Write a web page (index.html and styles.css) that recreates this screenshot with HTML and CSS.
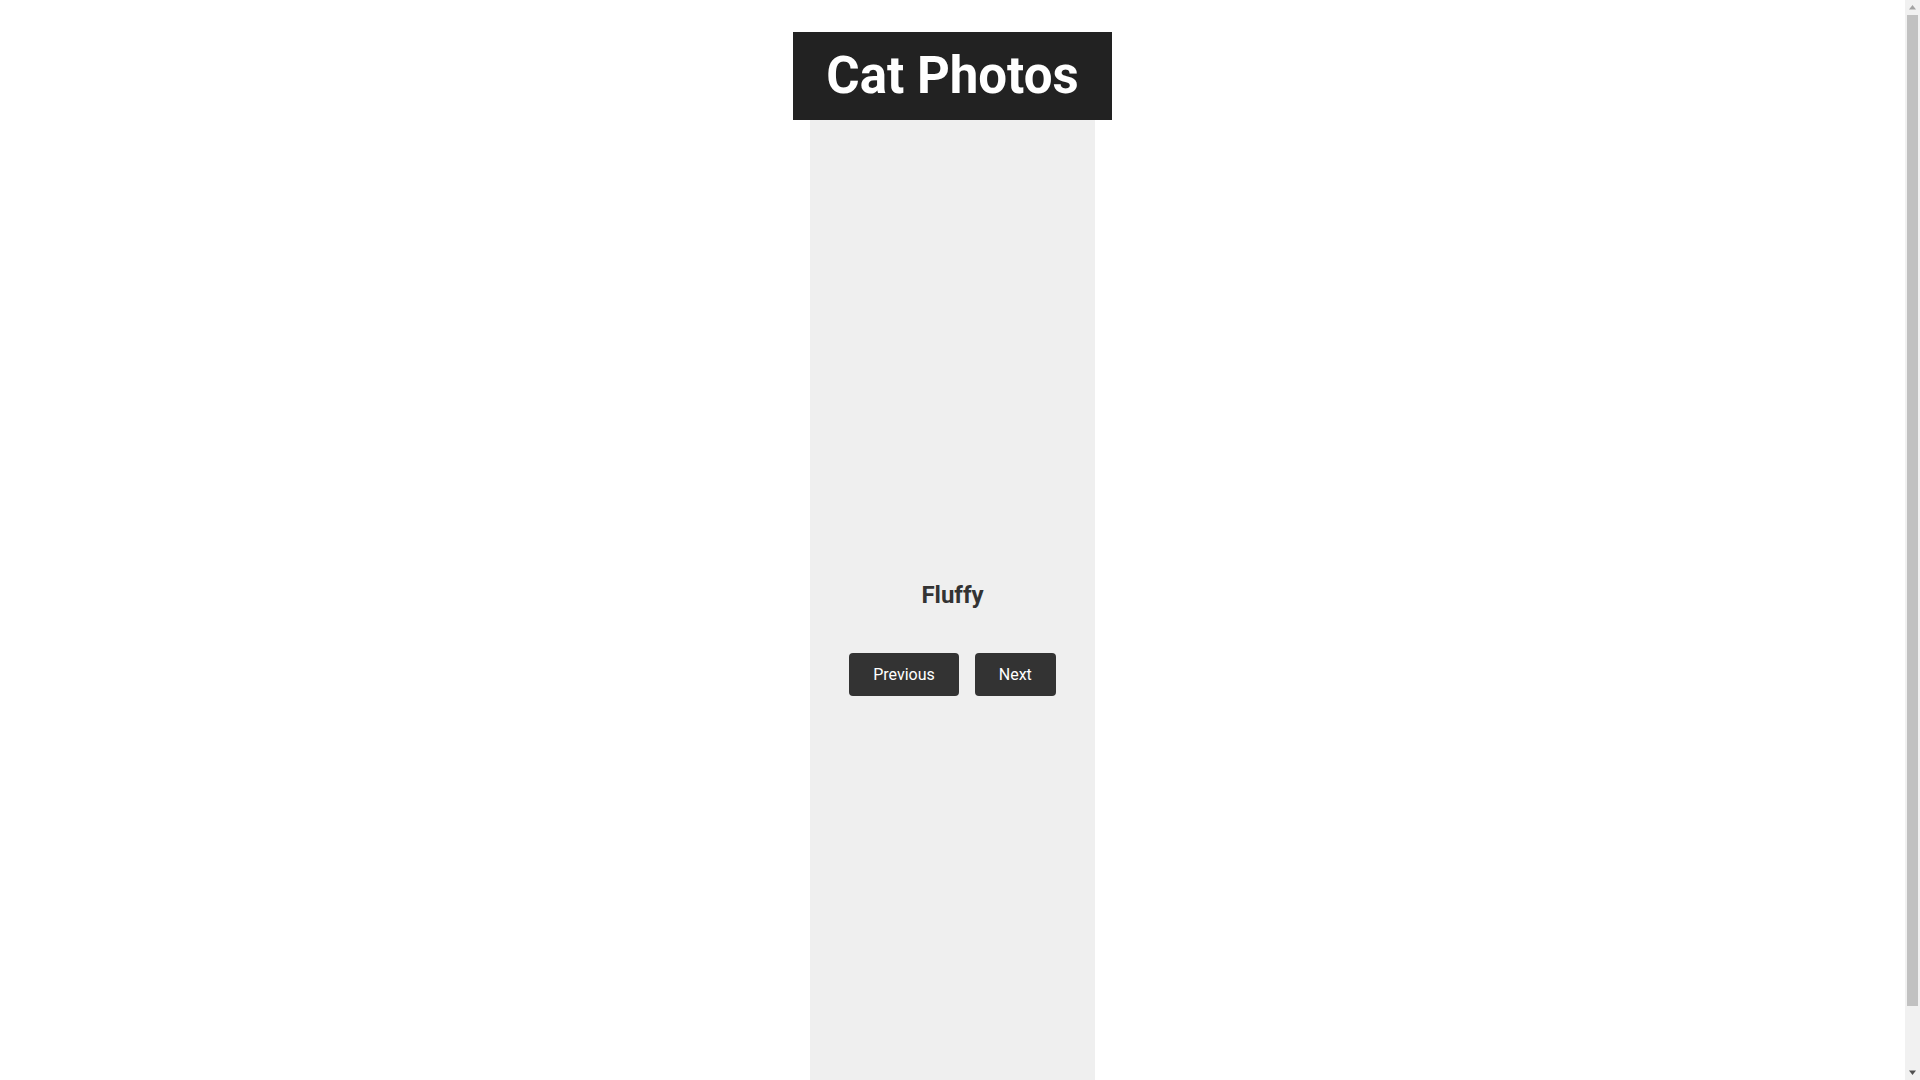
FILE: index.html
```html
<!DOCTYPE html>
<html lang="en">
<head>
<meta charset="utf-8">
<title>Cat Photos</title>
<link rel="stylesheet" href="styles.css">
</head>
<body>
<main class="page">
  <h1 class="title">Cat Photos</h1>
  <section class="card">
    <div class="photo"></div>
    <h2 class="name">Fluffy</h2>
    <div class="controls">
      <button class="btn">Previous</button>
      <button class="btn">Next</button>
    </div>
  </section>
</main>
<div class="scrollbar" aria-hidden="true">
  <div class="sb-arrow">
    <svg width="15" height="15" viewBox="0 0 15 15"><path d="M4 9.5 L7.5 5 L11 9.5 Z" fill="#a3a3a3"/></svg>
  </div>
  <div class="sb-track"><div class="sb-thumb"></div></div>
  <div class="sb-arrow">
    <svg width="15" height="15" viewBox="0 0 15 15"><path d="M4 5.5 L11 5.5 L7.5 10 Z" fill="#505050"/></svg>
  </div>
</div>
</body>
</html>
```

FILE: styles.css
```css
html, body {
  margin: 0;
  padding: 0;
  background: #ffffff;
  font-family: Roboto, "Liberation Sans", sans-serif;
}

.page {
  width: calc(100% - 15px);
  display: flex;
  flex-direction: column;
  align-items: center;
  padding-top: 32px;
}

.title {
  margin: 0;
  background: #222222;
  color: #ffffff;
  font-size: 51px;
  font-weight: 700;
  line-height: 56px;
  padding: 16px 33px;
}

.card {
  width: 285px;
  height: 1024px;
  background: #efefef;
  display: flex;
  flex-direction: column;
  align-items: center;
}

.photo {
  height: 461px;
  width: 100%;
}

.name {
  margin: 0;
  font-size: 24px;
  font-weight: 700;
  line-height: 28px;
  color: #333333;
}

.controls {
  display: flex;
  gap: 16px;
  margin-top: 44px;
}

.btn {
  background: #333333;
  color: #ffffff;
  border: none;
  border-radius: 4px;
  font-family: Roboto, "Liberation Sans", sans-serif;
  font-size: 16px;
  font-weight: 400;
  line-height: 19px;
  padding: 12px 24px;
  cursor: pointer;
}

.scrollbar {
  position: fixed;
  top: 0;
  right: 0;
  width: 15px;
  height: 100vh;
  background: #f1f1f1;
  display: flex;
  flex-direction: column;
}

.sb-arrow {
  height: 15px;
  flex: none;
}

.sb-arrow svg {
  display: block;
}

.sb-track {
  flex: 1;
  padding: 0 2px;
}

.sb-thumb {
  height: 991px;
  background: #c1c1c1;
}
```
